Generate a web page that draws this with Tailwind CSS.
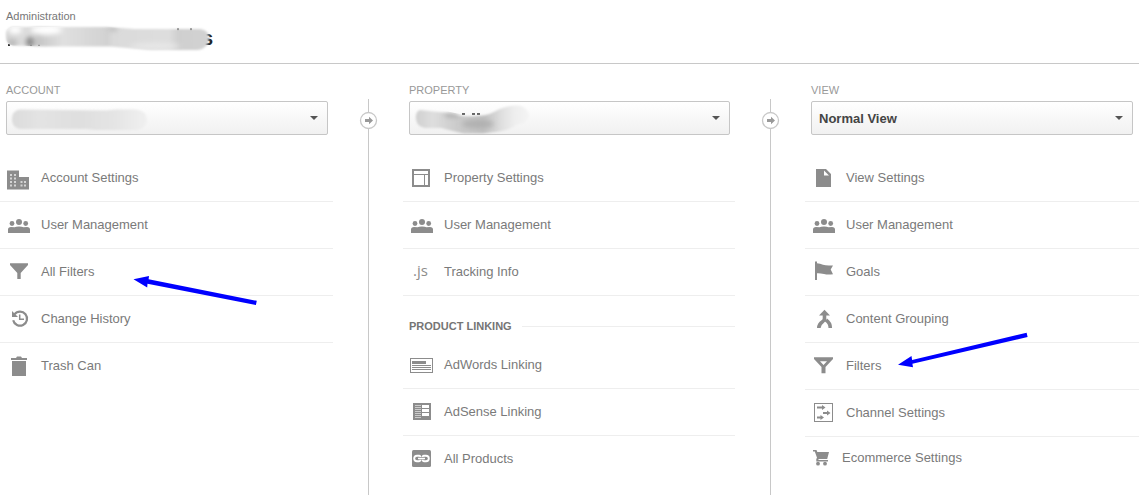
<!DOCTYPE html>
<html lang="en">
<head>
<meta charset="utf-8">
<meta name="viewport" content="width=device-width, initial-scale=1">
<title>Administration</title>
<script src="https://cdn.jsdelivr.net/npm/@tailwindcss/browser@4"></script>
</head>
<body class="bg-white font-['Liberation_Sans',Arial,sans-serif] text-[13px] text-[#7a7a7a]">
<svg class="hidden" aria-hidden="true">
  <symbol id="users" viewBox="0 0 24 24"><circle cx="12" cy="9" r="3"/><circle cx="5" cy="10.500" r="2.400"/><circle cx="18.700" cy="10.500" r="2.400"/><path d="M1 20v-3.500Q1 14 4 14l3.500.3Q9 13.500 12 13.500t4.500.8L20 14q3 0 3 2.500V20z"/></symbol>
</svg>
<div class="flex min-h-screen flex-col overflow-x-hidden">
  <header class="h-16 border-b border-[#c8c8c8] px-1.5 pt-2">
    <p class="text-[11px] leading-4 text-[#777]">Administration</p>
    <h1 class="relative h-7 pl-[196px] text-[20px] font-bold leading-7 text-[#222]" aria-label="Account name hidden">s
      <svg class="absolute -left-1.5 top-0 h-7 w-[220px]" viewBox="0 24 220 28" aria-hidden="true">
        <defs>
          <filter id="soft" x="-10%" y="-20%" width="120%" height="140%"><feGaussianBlur stdDeviation="1"/></filter>
          <filter id="haze" x="-50%" y="-50%" width="200%" height="200%"><feGaussianBlur stdDeviation="2.500"/></filter>
          <linearGradient id="titleFade"><stop offset="0" stop-color="#d4d4d4"/><stop offset=".1" stop-color="#dcdcdc"/><stop offset=".16" stop-color="#c6c6c6"/><stop offset=".28" stop-color="#e0e0e0"/><stop offset=".5" stop-color="#d2d2d2"/><stop offset=".53" stop-color="#dadada"/><stop offset=".8" stop-color="#dedede"/><stop offset=".85" stop-color="#cfcfcf"/><stop offset="1" stop-color="#d2d2d2"/></linearGradient>
          <clipPath id="titleClip"><path d="M12 27Q5 29 6 37q0 7 7 8.500l32 1h65l40 3.500h48q11-2 11-12 0-8-9-9l-65 0-28-2H58z"/></clipPath>
        </defs>
        <path d="M8 44h2v2H8zM30 44h2v2h-2zM38 44h2v2h-2zM177 28.500h2v2h-2zM190 28.500h2v2h-2z" fill="#222"/>
        <path filter="url(#soft)" fill="url(#titleFade)" d="M12 27Q5 29 6 37q0 7 7 8.500l32 1h65l40 3.500h48q11-2 11-12 0-8-9-9l-65 0-28-2H58z"/>
        <g clip-path="url(#titleClip)"><g filter="url(#haze)"><ellipse cx="30" cy="42" rx="4" ry="5" fill="#888"/><ellipse cx="12" cy="43" rx="5" ry="4" fill="#bbb"/><ellipse cx="46" cy="30" rx="16" ry="5" fill="#fff"/><ellipse cx="15" cy="30" rx="7" ry="4" fill="#fff"/><ellipse cx="113" cy="29" rx="5" ry="2" fill="#bbb"/><ellipse cx="155" cy="46" rx="25" ry="3" fill="#e8e8e8"/></g></g>
      </svg>
    </h1>
  </header>

  <main class="grid grow grid-cols-[333fr_70px_332fr_70px_334fr]">
    <section>
      <div class="pl-1.5 pr-[5px] pt-[18px]">
        <label for="account" class="block h-[19px] text-[11px] leading-4 text-[#999]">ACCOUNT</label>
        <div class="relative">
          <select id="account" class="block h-[34px] w-full appearance-none rounded-xs border border-[#c6c6c6] bg-linear-to-b from-white to-[#f1f1f1] px-2 font-bold text-[#444]"><option></option></select>
          <svg class="pointer-events-none absolute right-2.5 top-[15px] h-1 w-2" viewBox="0 0 8 4" fill="#555" aria-hidden="true"><path d="M0 0h8L4 4z"/></svg>
          <svg class="pointer-events-none absolute left-0 top-0 h-[34px] w-[150px]" viewBox="6 101 150 34" aria-hidden="true">
            <defs><linearGradient id="accountFade"><stop offset="0" stop-color="#dcdcdc"/><stop offset=".2" stop-color="#e3e3e3"/><stop offset=".5" stop-color="#dfdfdf"/><stop offset=".75" stop-color="#e4e4e4"/><stop offset="1" stop-color="#f0f0f0"/></linearGradient></defs>
            <path filter="url(#soft)" fill="url(#accountFade)" d="M20 109.500q-8 1-8 10t9 9.500h65l10 1h40q11-1 11-10t-11-10.500h-20l-10 1z"/>
          </svg>
        </div>
      </div>
      <ul class="mt-5">
        <li class="border-b border-[#eee]"><a href="#" class="flex h-[46px] items-center gap-2.5 pl-[7px]">
          <svg class="size-6" viewBox="0 0 24 24" fill="#8c8c8c" aria-hidden="true"><path d="M0 4.500h12V11h10v12.500H0z"/><path fill="#d4d4d4" d="M3 8h2v2H3zM7 8h2v2H7zM3 11.500h2v2H3zM7 11.500h2v2H7zM3 15h2v2H3zM7 15h2v2H7zM3 18.500h2v2H3zM7 18.500h2v2H7zM13.500 15h2v2h-2zM17 15h2v2h-2zM13.500 18.500h2v2h-2zM17 18.500h2v2h-2z"/></svg>Account Settings</a></li>
        <li class="border-b border-[#eee]"><a href="#" class="flex h-[46px] items-center gap-2.5 pl-[7px]">
          <svg class="size-6" fill="#8c8c8c" aria-hidden="true"><use href="#users"/></svg>User Management</a></li>
        <li class="relative border-b border-[#eee]"><a href="#" class="flex h-[46px] items-center gap-2.5 pl-[7px]">
          <svg class="size-6" viewBox="0 0 24 24" fill="#8c8c8c" aria-hidden="true"><path d="M3 3.300h18v1.700l-7.300 8V19h-3.400v-6L3 5z"/></svg>All Filters</a>
          <svg class="pointer-events-none absolute left-[130px] top-6 z-10 h-9 w-[130px]" viewBox="130 273 130 36" fill="#00f" aria-hidden="true"><path d="M133.500 279.300l15.500-3.300-.4 3.200 108.200 21.600-.9 4.200-108.400-21.300-.3 3.700z"/></svg></li>
        <li class="border-b border-[#eee]"><a href="#" class="flex h-[46px] items-center gap-2.5 pl-[7px]">
          <svg class="size-6" viewBox="0 0 24 24" fill="none" stroke="#8c8c8c" aria-hidden="true"><path stroke-width="2.200" d="M7.500 7.400A7 7 0 1 1 6.200 13.200"/><path fill="#8c8c8c" stroke="none" d="M5 4v6h6z"/><path stroke-width="1.500" d="M12.700 7.500v4.700H17"/></svg>Change History</a></li>
        <li><a href="#" class="flex h-[46px] items-center gap-2.5 pl-[7px]">
          <svg class="size-6" viewBox="0 0 24 24" fill="#8c8c8c" aria-hidden="true"><path d="M4 4h5l1-1.500h4L15 4h5v2H4zM5 7h14v15H5z"/></svg>Trash Can</a></li>
      </ul>
    </section>

    <div class="relative mt-[35px] flex justify-center" aria-hidden="true">
      <div class="w-px bg-[#c8c8c8]"></div>
      <svg class="absolute top-3 size-[19px]" viewBox="0 0 19 19"><circle cx="9.500" cy="9.500" r="8" fill="#fff" stroke="#c8c8c8" stroke-width="1.300"/><path fill="#999" d="M6 8h4V5.800L14 9.500l-4 3.700V11H6z"/></svg>
    </div>

    <section>
      <div class="pl-1.5 pr-[5px] pt-[18px]">
        <label for="property" class="block h-[19px] text-[11px] leading-4 text-[#999]">PROPERTY</label>
        <div class="relative">
          <select id="property" class="block h-[34px] w-full appearance-none rounded-xs border border-[#c6c6c6] bg-linear-to-b from-white to-[#f1f1f1] px-2 font-bold text-[#444]"><option></option></select>
          <svg class="pointer-events-none absolute right-2.5 top-[15px] h-1 w-2" viewBox="0 0 8 4" fill="#555" aria-hidden="true"><path d="M0 0h8L4 4z"/></svg>
          <svg class="pointer-events-none absolute left-0 top-0 h-[34px] w-[130px]" viewBox="409 101 130 34" aria-hidden="true">
            <defs><linearGradient id="propertyFade"><stop offset="0" stop-color="#d0d0d0"/><stop offset=".15" stop-color="#dedede"/><stop offset=".35" stop-color="#ccc"/><stop offset=".6" stop-color="#c0c0c0"/><stop offset=".75" stop-color="#dedede"/><stop offset=".88" stop-color="#efefef"/><stop offset="1" stop-color="#f4f4f4"/></linearGradient>
            <clipPath id="propertyClip"><path d="M420 110q-5 2-4 9 1 8 9 9h18l20 5.500h20l22-2q12-2 14-7 10-1 10-10-3-9-12-9-12 0-22 6-17 5-33 3l-14-3z"/></clipPath></defs>
            <path d="M462 113h3v2h-3zM472 113h3v2h-3zM477 113h3v2h-3z" fill="#666"/>
            <path filter="url(#soft)" fill="url(#propertyFade)" d="M420 110q-5 2-4 9 1 8 9 9h16l22 5.500h20l16-2q12-2 18-7 12-1 12-10-3-9-12-9-12 0-22 6-12 7-38 4l-14-3z"/>
            <g clip-path="url(#propertyClip)"><g filter="url(#haze)"><ellipse cx="478" cy="124" rx="16" ry="4" fill="#b0b0b0"/><ellipse cx="452" cy="115" rx="8" ry="2" fill="#aaa"/></g></g>
          </svg>
        </div>
      </div>
      <ul class="mt-5">
        <li class="border-b border-[#eee]"><a href="#" class="flex h-[46px] items-center gap-2.5 pl-[7px]">
          <svg class="size-6" viewBox="0 0 24 24" fill="#8c8c8c" aria-hidden="true"><path fill-rule="evenodd" d="M2 3h18v18H2zM4 5v3h14V5zM4 9v10h10V9zM15 9v10h3V9z"/></svg>Property Settings</a></li>
        <li class="border-b border-[#eee]"><a href="#" class="flex h-[46px] items-center gap-2.5 pl-[7px]">
          <svg class="size-6" fill="#8c8c8c" aria-hidden="true"><use href="#users"/></svg>User Management</a></li>
        <li class="border-b border-[#eee]"><a href="#" class="flex h-[46px] items-center gap-2.5 pl-[7px]">
          <span class="h-6 w-6 pl-[3px] font-['Open_Sans',sans-serif] text-[15px] leading-[20px] text-[#8c8c8c]" aria-hidden="true">.js</span>Tracking Info</a></li>
      </ul>
      <h2 class="flex h-[46px] items-center gap-2.5 pl-1.5 pt-3.5 text-[11px] font-bold text-[#757575] after:h-px after:grow after:bg-[#eee]">PRODUCT LINKING</h2>
      <ul>
        <li class="border-b border-[#eee]"><a href="#" class="flex h-[46px] items-center gap-2.5 pl-[7px]">
          <svg class="size-6" viewBox="0 0 24 24" fill="#8c8c8c" aria-hidden="true"><path fill-rule="evenodd" d="M0 5h23v15H0zM1 6v13h21V6z"/><path d="M2 8h14v3H2zM2 12h19v1H2zM2 14h19v1H2zM2 16h19v1H2z"/></svg>AdWords Linking</a></li>
        <li class="border-b border-[#eee]"><a href="#" class="flex h-[46px] items-center gap-2.5 pl-[7px]">
          <svg class="size-6" viewBox="0 0 24 24" fill="#8c8c8c" aria-hidden="true"><path d="M3 3h18v17H3z"/><path fill="#fff" d="M12 5h7v3h-7zM12 9h7v3h-7zM12 13h7v3h-7z"/><path fill="#ccc" d="M5 5h6v1H5zM5 7h6v1H5zM5 9h6v1H5zM5 11h6v1H5zM5 13h6v1H5zM5 15h6v1H5zM5 17h6v1H5z"/></svg>AdSense Linking</a></li>
        <li><a href="#" class="flex h-[46px] items-center gap-2.5 pl-[7px]">
          <svg class="size-6" viewBox="0 0 24 24" fill="none" aria-hidden="true"><rect x="2" y="3" width="19" height="17" rx="1.500" fill="#8c8c8c"/><path stroke="#fff" stroke-width="1.900" d="M10.300 10V9.500Q10 8.800 9 8.800H7Q4.200 8.800 4.200 11.500T7 14.200h2q1 0 1.300-.8v-.6M12.700 10V9.500q.3-.7 1.300-.7h2q2.800 0 2.800 2.700T16 14.200h-2q-1 0-1.300-.8v-.6"/><path stroke="#fff" stroke-width="1.500" d="M8 11.500h7"/></svg>All Products</a></li>
      </ul>
    </section>

    <div class="relative mt-[35px] flex justify-center" aria-hidden="true">
      <div class="w-px bg-[#c8c8c8]"></div>
      <svg class="absolute top-3 size-[19px]" viewBox="0 0 19 19"><circle cx="9.500" cy="9.500" r="8" fill="#fff" stroke="#c8c8c8" stroke-width="1.300"/><path fill="#999" d="M6 8h4V5.800L14 9.500l-4 3.700V11H6z"/></svg>
    </div>

    <section>
      <div class="px-1.5 pt-[18px]">
        <label for="view" class="block h-[19px] text-[11px] leading-4 text-[#999]">VIEW</label>
        <div class="relative">
          <select id="view" class="block h-[34px] w-full appearance-none rounded-xs border border-[#c6c6c6] bg-linear-to-b from-white to-[#f1f1f1] px-[7px] pt-0.5 font-bold text-[#444]"><option>Normal View</option></select>
          <svg class="pointer-events-none absolute right-2.5 top-[15px] h-1 w-2" viewBox="0 0 8 4" fill="#555" aria-hidden="true"><path d="M0 0h8L4 4z"/></svg>
        </div>
      </div>
      <ul class="mt-5">
        <li class="border-b border-[#eee]"><a href="#" class="flex h-[46px] items-center gap-2.5 pl-[7px]">
          <svg class="size-6" viewBox="0 0 24 24" fill="#8c8c8c" aria-hidden="true"><path fill-rule="evenodd" d="M4 3h10l5 5v13H4zM12 4.500V9.500h5z"/></svg>View Settings</a></li>
        <li class="border-b border-[#eee]"><a href="#" class="flex h-[46px] items-center gap-2.5 pl-[7px]">
          <svg class="size-6" fill="#8c8c8c" aria-hidden="true"><use href="#users"/></svg>User Management</a></li>
        <li class="border-b border-[#eee]"><a href="#" class="flex h-[46px] items-center gap-2.5 pl-[7px]">
          <svg class="size-6" viewBox="0 0 24 24" fill="#8c8c8c" aria-hidden="true"><path d="M3 1.500h2v1.700q3 .2 6 1.600 3.500 1.200 10 .6L18.700 9.500 21 14.200q-5 .8-9-.2-4-1-7-.8V20H3z"/></svg>Goals</a></li>
        <li class="border-b border-[#eee]"><a href="#" class="flex h-[46px] items-center gap-2.5 pl-[7px]">
          <svg class="size-6" viewBox="0 0 24 24" fill="none" stroke="#8c8c8c" stroke-width="3.600" aria-hidden="true"><path d="M12.500 6v5.500q0 2-2 3.300Q7 17 6.800 21M14 13q4.300 3 4.300 8"/><path fill="#8c8c8c" stroke="none" d="M12.500 2.800L18 8.500H7z"/></svg>Content Grouping</a></li>
        <li class="relative border-b border-[#eee]"><a href="#" class="flex h-[46px] items-center gap-2.5 pl-[7px]">
          <svg class="size-6" viewBox="0 0 24 24" fill="#8c8c8c" aria-hidden="true"><path fill-rule="evenodd" d="M2 3.300h19V5l-7.500 8v6.300h-4V13L2 5zM8 7.300l3.500 3.700L15 7.300z"/></svg>Filters</a>
          <svg class="pointer-events-none absolute left-[90px] -top-3.5 z-10 h-[42px] w-[136px]" viewBox="895 329 136 42" fill="#00f" aria-hidden="true"><path d="M898 364.700l13.500-8.700.6 4.100L1026.600 332.800l1 4.300L912.400 363.700l.6 3.600z"/></svg></li>
        <li class="border-b border-[#eee]"><a href="#" class="flex h-[46px] items-center gap-2.5 pl-[7px]">
          <svg class="size-6" viewBox="0 0 24 24" fill="#8c8c8c" aria-hidden="true"><path fill-rule="evenodd" d="M2 2h19v19H2zM3 3v17h17V3z"/><path d="M5 5.500h5V4l3.500 2.500L10 9V7.500H5zM11 11h4V9.500l3.500 2.500-3.500 2.500V13h-4zM5 15.500h3.500V14l3.500 2.500L8.500 19v-1.500H5z"/></svg>Channel Settings</a></li>
        <li><a href="#" class="flex h-[42px] items-center gap-2.5 pl-[7px]">
          <svg class="size-5" viewBox="0 0 20 20" fill="#8c8c8c" aria-hidden="true"><path d="M1 2h3.500l.8 2H17l-1.800 7H6.500v1H16v1.500H4.300V11L5 9.800 2.800 3.500H1z"/><circle cx="6" cy="15.700" r="1.900"/><circle cx="13" cy="15.700" r="1.900"/></svg>Ecommerce Settings</a></li>
      </ul>
    </section>
  </main>
</div>
</body>
</html>
